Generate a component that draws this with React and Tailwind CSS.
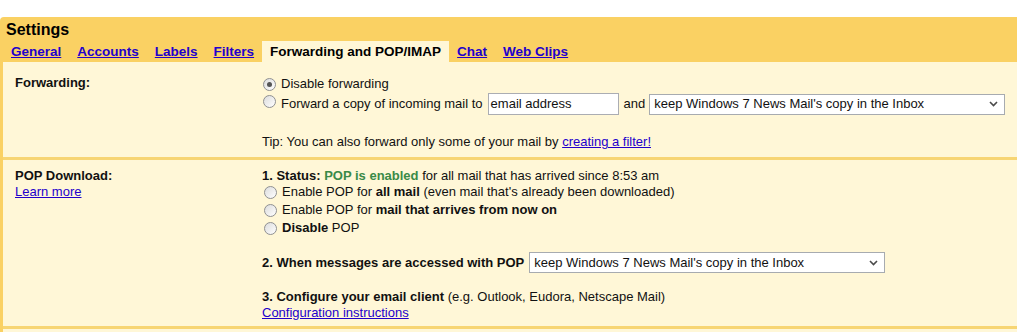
import React from "react";

const Radio = ({ checked, className = "" }) => (
  <span
    className={`inline-flex w-[13px] h-[13px] rounded-full border border-[#8f9092] bg-linear-to-br from-[#dcdcdc] to-white items-center justify-center shrink-0 ${className}`}
  >
    {checked && <span className="w-[5px] h-[5px] rounded-full bg-[#555]" />}
  </span>
);

const Chevron = () => (
  <svg width="9" height="6" viewBox="0 0 9 6" className="shrink-0">
    <path d="M1 1 L4.5 4.5 L8 1" fill="none" stroke="#4a4a4a" strokeWidth="1.6" />
  </svg>
);

const Select = ({ className = "" }) => (
  <div
    className={`flex items-center justify-between w-[356px] h-[21px] border border-[#a7abb0] bg-white pl-[4px] pr-[6px] ${className}`}
  >
    <span>keep Windows 7 News Mail's copy in the Inbox</span>
    <Chevron />
  </div>
);

const Tab = ({ children }) => (
  <a className="px-[8px] h-full flex items-center text-[#2200cc] underline font-bold">{children}</a>
);

export default function App() {
  return (
    <div className="w-[1017px] h-[332px] overflow-hidden bg-white text-[13px] text-[#111] font-['Liberation_Sans',Arial,sans-serif] leading-[16px]">
      <div className="h-[17px]" />
      <div className="bg-[#fad163] rounded-tl-[4px]">
        <div className="pl-[6px] pt-[4px] h-[24px] text-[16px] leading-[18px] font-bold text-black">Settings</div>
        <div className="flex h-[21px] pl-[3px] text-[13.5px] leading-[16px]">
          <Tab>General</Tab>
          <Tab>Accounts</Tab>
          <Tab>Labels</Tab>
          <Tab>Filters</Tab>
          <div className="px-[8px] h-full flex items-center bg-[#fff7d7] font-bold text-black">Forwarding and POP/IMAP</div>
          <Tab>Chat</Tab>
          <Tab>Web Clips</Tab>
        </div>
      </div>
      <div className="border-l-[3px] border-[#fad163] bg-[#fff7d7]">
        {/* Forwarding */}
        <div className="flex pt-[13px] pb-[7px] border-b-[3px] border-[#f7d573]">
          <div className="w-[259px] pl-[12px] font-bold">Forwarding:</div>
          <div className="flex flex-col">
            <div className="flex items-center h-[18px] ml-[1px]">
              <Radio checked />
              <span className="ml-[5px]">Disable forwarding</span>
            </div>
            <div className="flex items-center h-[22px] ml-[1px]">
              <Radio className="self-start mt-[2px]" />
              <span className="ml-[5px]">Forward a copy of incoming mail to</span>
              <div className="ml-[5px] w-[131px] h-[22px] border border-[#abadb3] bg-white flex items-center pl-[2px]">
                email address
              </div>
              <span className="ml-[5px]">and</span>
              <Select className="ml-[4px]" />
            </div>
            <div className="mt-[19px] h-[16px]">
              Tip: You can also forward only some of your mail by{" "}
              <a className="text-[#2200cc] underline">creating a filter!</a>
            </div>
          </div>
        </div>
        {/* POP */}
        <div className="flex pt-[8px] pb-[5px] border-b-[3px] border-[#f7d573]">
          <div className="w-[259px] pl-[12px] flex flex-col">
            <span className="font-bold h-[16px]">POP Download:</span>
            <a className="text-[#2200cc] underline h-[16px]">Learn more</a>
          </div>
          <div className="flex flex-col">
            <div className="h-[15px]">
              <span className="font-bold">1. Status: </span>
              <span className="font-bold text-[#3a8a47]">POP is enabled</span> for all mail that has arrived since 8:53 am
            </div>
            <div className="flex items-center h-[18px] ml-[2px]">
              <Radio />
              <span className="ml-[5px]">
                Enable POP for <b>all mail</b> (even mail that's already been downloaded)
              </span>
            </div>
            <div className="flex items-center h-[18px] ml-[2px]">
              <Radio />
              <span className="ml-[5px]">
                Enable POP for <b>mail that arrives from now on</b>
              </span>
            </div>
            <div className="flex items-center h-[18px] ml-[2px]">
              <Radio />
              <span className="ml-[5px]">
                <b>Disable</b> POP
              </span>
            </div>
            <div className="flex items-center h-[21px] mt-[15px]">
              <span className="font-bold">2. When messages are accessed with POP</span>
              <Select className="ml-[5px]" />
            </div>
            <div className="mt-[16px] h-[16px]">
              <b>3. Configure your email client</b> (e.g. Outlook, Eudora, Netscape Mail)
            </div>
            <a className="text-[#2200cc] underline h-[16px]">Configuration instructions</a>
          </div>
        </div>
        <div className="h-[10px]" />
      </div>
    </div>
  );
}
